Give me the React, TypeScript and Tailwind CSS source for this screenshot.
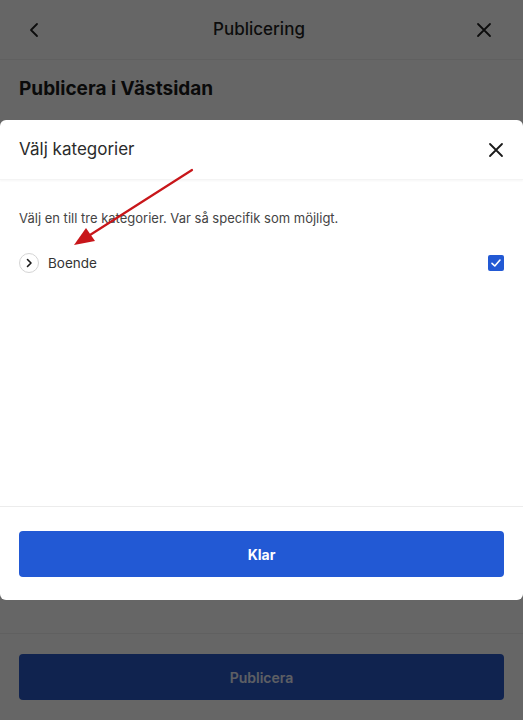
import React from 'react';

// Publicering – kategori-val (modal över sidan)
const App: React.FC = () => {
  return (
    <div className="relative w-[523px] h-[720px] overflow-hidden bg-white font-['Inter','Liberation_Sans',sans-serif]">
      {/* sidan under */}
      <div className="h-full flex flex-col">
        <div className="h-[60px] flex items-center justify-between pl-[26px] pr-[31px] border-b border-[#f0f0f0]">
          <svg width="16" height="16" viewBox="0 0 16 16" fill="none" stroke="#1f1f1f" strokeWidth="1.8" strokeLinecap="round" strokeLinejoin="round">
            <path d="M11 2 L5 8 L11 14" />
          </svg>
          <span className="text-[17px] font-medium text-[#1f1f1f]">Publicering</span>
          <svg width="16" height="16" viewBox="0 0 16 16" fill="none" stroke="#1f1f1f" strokeWidth="1.8" strokeLinecap="round">
            <path d="M2 2 L14 14 M14 2 L2 14" />
          </svg>
        </div>
        <div className="px-[19px] pt-[15px]">
          <h1 className="text-[19px] font-bold text-[#1a1a1a]">Publicera i Västsidan</h1>
        </div>
        <div className="flex-1" />
        <div className="border-t border-[#f0f0f0] px-[19px] pt-[20px] pb-[20px]">
          <div className="h-[46px] rounded-[4px] bg-[#2857c6] flex items-center justify-center text-[14px] font-semibold text-white/90">
            Publicera
          </div>
        </div>
      </div>

      {/* overlay */}
      <div className="absolute inset-0 bg-black/60" />

      {/* modal */}
      <div className="absolute left-0 right-0 top-[120px] h-[480px] bg-white rounded-[6px] flex flex-col">
        <div className="h-[60px] flex items-center justify-between px-[19px] shadow-[0_1px_2px_rgba(0,0,0,0.04)] border-b border-[#f4f4f4]">
          <span className="text-[17px] text-[#2b2b2b]">Välj kategorier</span>
          <svg width="16" height="16" viewBox="0 0 16 16" fill="none" stroke="#1a1a1a" strokeWidth="1.8" strokeLinecap="round">
            <path d="M2 2 L14 14 M14 2 L2 14" />
          </svg>
        </div>
        <div className="flex-1 px-[19px] pt-[29px]">
          <p className="text-[13px] text-[#444]">Välj en till tre kategorier. Var så specifik som möjligt.</p>
          <div className="mt-[24px] flex items-center justify-between">
            <div className="flex items-center gap-[9px]">
              <div className="w-[20px] h-[20px] rounded-full border border-[#d4d4d4] flex items-center justify-center">
                <svg width="10" height="10" viewBox="0 0 10 10" fill="none" stroke="#1a1a1a" strokeWidth="1.6" strokeLinecap="round" strokeLinejoin="round">
                  <path d="M3.5 1.5 L7 5 L3.5 8.5" />
                </svg>
              </div>
              <span className="text-[13.5px] text-[#333]">Boende</span>
            </div>
            <div className="w-[16px] h-[16px] rounded-[2px] bg-[#2259d4] flex items-center justify-center">
              <svg width="12" height="12" viewBox="0 0 12 12" fill="none" stroke="white" strokeWidth="1.6" strokeLinecap="round" strokeLinejoin="round">
                <path d="M2 6.3 L4.8 9 L10 3" />
              </svg>
            </div>
          </div>
        </div>
        <div className="border-t border-[#ececec] px-[19px] pt-[24px] pb-[23px]">
          <div className="h-[46px] rounded-[4px] bg-[#2259d4] flex items-center justify-center text-[14px] font-bold text-white">
            Klar
          </div>
        </div>
      </div>

      {/* röd pil (annotering) */}
      <svg className="absolute left-0 top-0 pointer-events-none" width="523" height="720">
        <line x1="192" y1="170" x2="90" y2="235" stroke="#c8161a" strokeWidth="2.2" strokeLinecap="round" />
        <path d="M74 245 L86 228 L95 241 Z" fill="#c8161a" />
      </svg>
    </div>
  );
};

export default App;
